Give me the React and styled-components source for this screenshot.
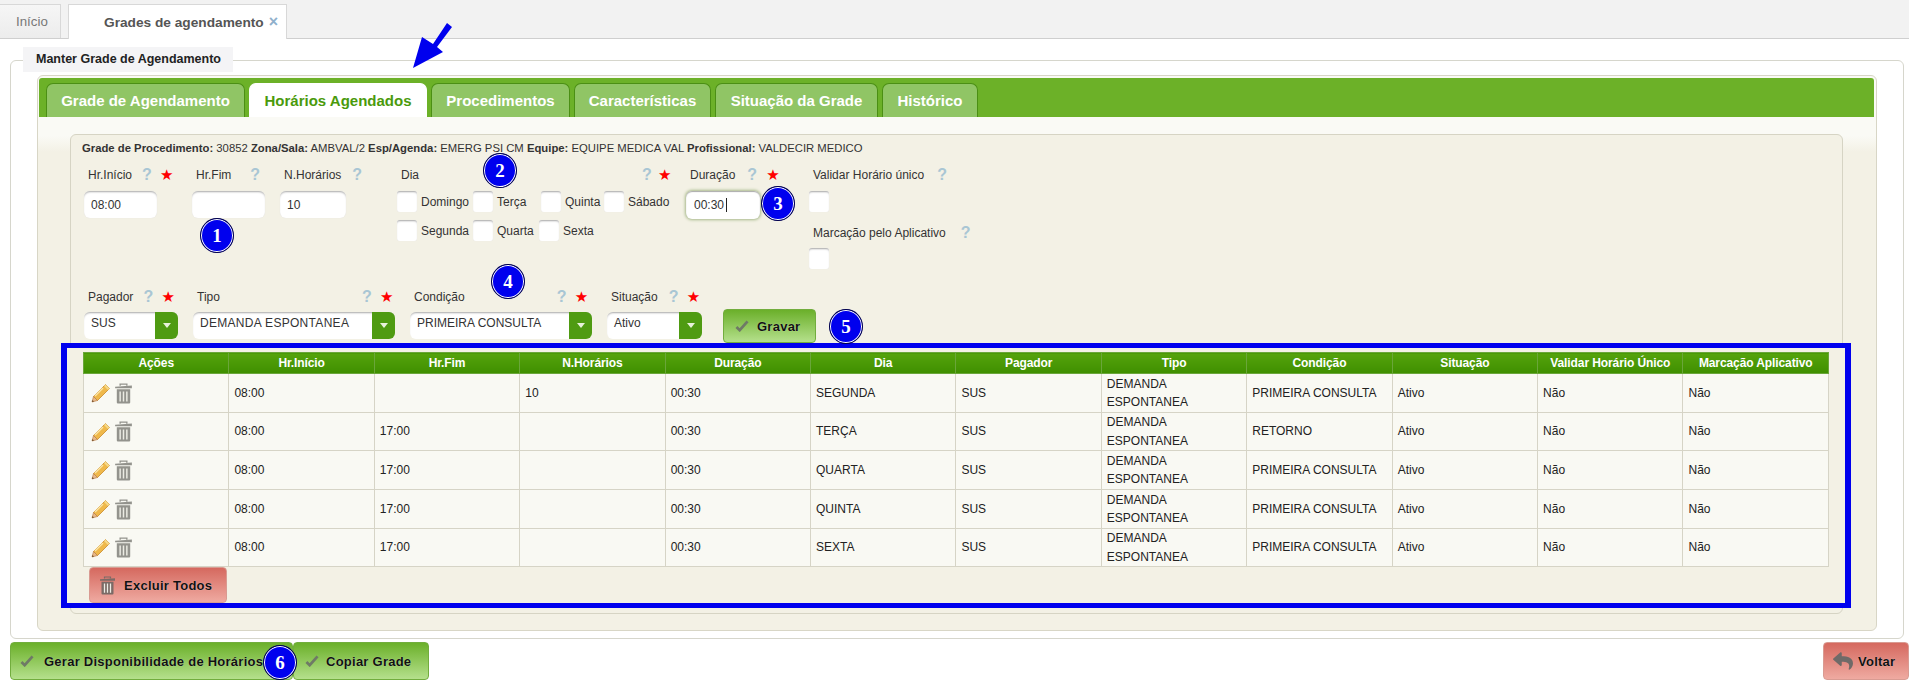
import React from "react";
import styled, { createGlobalStyle } from "styled-components";
import { FaReply } from "react-icons/fa";

const Global = createGlobalStyle`
  html, body { margin: 0; padding: 0; background: #fff; }
  body { width: 1909px; height: 685px; overflow: hidden; font-family: "Liberation Sans", Arial, sans-serif; font-size: 12px; color: #333; }
`;

const Page = styled.div`position: relative; width: 1909px; height: 685px; overflow: hidden;`;

const TabStrip = styled.nav`
  display: flex; align-items: flex-end; gap: 7px; height: 38px; background: #f2f2f2;
  border-bottom: 1px solid #cfcfcf;
`;
const PageTab = styled.div`
  box-sizing: border-box; height: ${p => (p.$active ? 35 : 34)}px; width: ${p => p.$w}px;
  margin-bottom: ${p => (p.$active ? -1 : 0)}px; padding-left: ${p => p.$pl}px;
  display: flex; align-items: center; gap: 5px; font-size: ${p => (p.$active ? 13.7 : 13.3)}px;
  font-weight: ${p => (p.$active ? 700 : 400)}; color: ${p => (p.$active ? "#555" : "#777")};
  background: ${p => (p.$active ? "#fff" : "linear-gradient(#f6f6f6, #ececec)")};
  border: 1px solid #d8d8d8; border-bottom: none; border-left-width: ${p => (p.$active ? 1 : 0)}px;
`;
const CloseX = styled.span`color: #8fb0cc; font-size: 16px; font-weight: 700;`;

const Fieldset = styled.section`
  margin: 21px 5px 0 10px; height: 579px; box-sizing: border-box;
  border: 1px solid #d6d6cc; border-radius: 6px;
`;
const Legend = styled.div`
  box-sizing: border-box; width: 210px; height: 25px; margin: -14px 0 0 12px; padding-left: 13px;
  background: #f4f4f6; font-size: 12.5px; font-weight: 700; color: #222; line-height: 25px;
`;
const TabsPanel = styled.div`
  box-sizing: border-box; height: 556px; margin: 3px 26px 0 26px;
  border: 1px solid #d8d6c6; border-radius: 6px; padding-top: 2px;
  background: linear-gradient(#fafaf5 0, #fafaf5 60px, #f3f1e5 76px);
`;
const TabHeader = styled.div`
  display: flex; gap: 4px; height: 39px; box-sizing: border-box; margin: 0 2px 0 1px; padding: 5px 0 0 7px;
  background: #6cb128; border-radius: 3px 3px 0 0;
`;
const GreenTab = styled.div`
  box-sizing: border-box; width: ${p => p.$w}px; height: 34px; display: flex; align-items: center; justify-content: center;
  font-size: 15px; font-weight: 700; border: 1px solid #4b8f14; border-bottom: none; border-radius: 7px 7px 0 0;
  color: ${p => (p.$active ? "#4a9a0c" : "#fff")};
  background: ${p => (p.$active ? "#fff" : "#90c565")};
  border-color: ${p => (p.$active ? "#fff" : "#4b8f14")};
`;
const TabBody = styled.div`padding: 17px 33px 0 32px;`;
const InfoPanel = styled.div`
  box-sizing: border-box; height: 480px; border: 1px solid #d6d4c4; border-radius: 6px; background: #f3f1e5;
`;
const InfoLine = styled.div`
  padding: 6px 0 0 11px; height: 14px; line-height: 14px; font-size: 11.3px; color: #333;
  b { font-weight: 700; }
`;
const FormRow = styled.div`display: flex; margin: ${p => p.$mt}px 0 0 13px; align-items: flex-start;`;
const Field = styled.div`width: ${p => p.$w}px; flex: none; display: flex; flex-direction: column;`;
const LabelRow = styled.div`
  display: flex; align-items: center; height: 16px; margin-bottom: ${p => p.$mb ?? 8}px; margin-top: ${p => p.$mt ?? 0}px; padding-left: 4px;
  font-size: 12px; color: #333; white-space: nowrap;
`;
const Q = styled.span`
  width: 8px; margin-left: ${p => p.$ml}px; font-size: 16px; font-weight: 700; color: #a9c6d4; text-align: center;
`;
const Star = styled.span`
  width: 12px; margin-left: ${p => p.$ml ?? 10}px; font-family: "DejaVu Sans", sans-serif; font-size: 15px; color: #f00; text-align: center; line-height: 12px;
`;
const TextInput = styled.input`
  box-sizing: border-box; width: ${p => p.$w}px; height: 27px; padding: 0 7px; border: none; border-radius: 6px;
  font: 12px "Liberation Sans", Arial, sans-serif; color: #333; background: #fff; outline: none;
  box-shadow: inset 0 2px 2px -1px #a9a9a9, 0 0 1px #ddd;
`;
const FocusWrap = styled.div`position: relative; width: 74px;`;
const FocusInput = styled(TextInput)`
  height: 28px; padding-left: 8px; box-shadow: 0 0 3px 1px #a7b98a, inset 0 1px 1px #aaa;
`;
const Caret = styled.i`position: absolute; left: 40px; top: 7px; width: 1px; height: 14px; background: #222;`;
const Check = styled.input.attrs({ type: "checkbox" })`
  appearance: none; -webkit-appearance: none; box-sizing: border-box; flex: none; width: 20px; height: 21px; margin: 0;
  border-radius: 3px; background: #fff; box-shadow: inset 0 2px 2px -1px #a5a5a5, 0 0 1px #e3e3e3;
`;
const DayRow = styled.div`display: flex; height: 29px; &:last-child { height: 21px; }`;
const DayItem = styled.label`
  display: flex; align-items: center; gap: 4px; width: ${p => p.$w}px; height: 21px; flex: none; font-size: 12px; color: #333;
`;
const SelectBox = styled.div`
  box-sizing: border-box; display: flex; justify-content: space-between; width: ${p => p.$w}px; height: 27px;
  border-radius: 6px; overflow: hidden; background: #fff; box-shadow: inset 0 2px 2px -1px #a9a9a9;
`;
const SelectText = styled.span`padding: 4px 0 0 7px; font-size: 12px; color: #333; letter-spacing: ${p => p.$ls ?? 0}px; white-space: nowrap;`;
const SelectArrow = styled.span`
  width: 23px; background: #4f9b12; display: flex; align-items: center; justify-content: center;
  &::after { content: ""; border-left: 4px solid transparent; border-right: 4px solid transparent; border-top: 5px solid #e8f2dc; }
`;
const Button = styled.button`
  box-sizing: border-box; flex: none; display: flex; align-items: center; gap: ${p => p.$gap ?? 9}px;
  width: ${p => p.$w}px; height: ${p => p.$h}px; padding: 0 0 0 ${p => p.$pl ?? 9}px; margin: ${p => p.$m ?? 0};
  border: 1px solid ${p => (p.$red ? "#d99b92" : "#72ad3e")}; border-radius: 4px;
  background: ${p => (p.$red ? "linear-gradient(#d5695f, #efaaa1)" : "linear-gradient(#6bb02a, #b5e08c)")};
  font: 700 13px "Liberation Sans", Arial, sans-serif; color: #111; letter-spacing: 0.25px; white-space: nowrap;
  text-shadow: 0 0 1px rgba(255,255,255,.5);
  & > svg { flex: none; }
`;
const TableFrame = styled.div`
  box-sizing: border-box; height: 265px; margin: 0 -9px 0 -10px; padding: 4px 16px 0 16px;
  border: 5px solid #0000ee; background: #f3f1e5; border-left-width: 6px; border-right-width: 6px;
`;
const Table = styled.table`
  width: 100%; table-layout: fixed; border-collapse: collapse; font-size: 12px; color: #222;
`;
const Th = styled.th`
  height: 20px; padding: 0; font-size: 12px; font-weight: 700; color: #fff; border: 1px solid #6aa63a;
  background: linear-gradient(#55a30c, #3f8f00); letter-spacing: -0.1px;
`;
const Tr = styled.tr`height: ${p => p.$h}px;`;
const Td = styled.td`
  padding: 0 0 0 5px; line-height: 18.5px; background: #f9f9f3; border: 1px solid #d6d4c6; overflow: hidden;
`;
const ActionIcons = styled.div`display: flex; align-items: center; gap: 3px; padding-left: 2px; height: 24px;`;
const BottomBar = styled.div`display: flex; margin: 3px 0 0 10px;`;
const Spacer = styled.div`flex: 1;`;
const Mark = styled.div`
  position: absolute; left: ${p => p.$x}px; top: ${p => p.$y}px; box-sizing: border-box; width: 34px; height: 35px;
  border-radius: 50%; background: #0000ee; border: 1px solid #00004a; box-shadow: inset 0 0 0 1px #fff;
  display: flex; align-items: center; justify-content: center;
  font: 700 19px "Liberation Serif", serif; color: #fff;
`;
const ArrowMark = styled.svg`position: absolute; left: 405px; top: 18px;`;

const Pencil = () => (
  <svg width="20" height="20" viewBox="0 0 20 20">
    <path d="M14.5 1.5l4 4L6.5 17.5l-4-4z" fill="#efb84a" stroke="#c98a2a" strokeWidth="0.8" />
    <path d="M13 3l4 4 1.5-1.5-4-4z" fill="#f5d98a" />
    <path d="M2.5 13.5l4 4-5.5 1.5z" fill="#e8b98a" stroke="#b5763a" strokeWidth="0.6" />
    <path d="M1 19l2-.5-1.5-1.5z" fill="#6b4a2a" />
    <path d="M12 5L4 13" stroke="#fbe6a8" strokeWidth="1.4" />
  </svg>
);
const Trash = ({ w = 19, h = 21, c = "#93938d" }) => (
  <svg width={w} height={h} viewBox="0 0 17 20" preserveAspectRatio="none">
    <path d="M5.5 2.5V1h6v1.5" fill="none" stroke={c} strokeWidth="1.2" />
    <path d="M1 3.5l15-1.2V5H1z" fill={c} />
    <path d="M2.5 6h12v12.5a1 1 0 0 1-1 1h-10a1 1 0 0 1-1-1z" fill={c} />
    <path d="M5.5 8v9.5M8.5 8v9.5M11.5 8v9.5" stroke="#ecece4" strokeWidth="1.3" />
  </svg>
);
const Tick = () => (
  <svg width="14" height="12" viewBox="0 0 15 13">
    <path d="M1.5 7.5l3.5 3.5L13.5 1.5" fill="none" stroke="#6f7a66" strokeWidth="3" />
  </svg>
);
const Label = ({ text, q, star, mb, s }) => (
  <LabelRow $mb={mb}>
    {text}
    <Q $ml={q}>?</Q>
    {star && <Star $ml={s}>★</Star>}
  </LabelRow>
);

const columns = ["Ações", "Hr.Início", "Hr.Fim", "N.Horários", "Duração", "Dia", "Pagador", "Tipo", "Condição", "Situação", "Validar Horário Único", "Marcação Aplicativo"];
const rows = [
  { fim: "", n: "10", dia: "SEGUNDA", cond: "PRIMEIRA CONSULTA", h: 39 },
  { fim: "17:00", n: "", dia: "TERÇA", cond: "RETORNO", h: 38 },
  { fim: "17:00", n: "", dia: "QUARTA", cond: "PRIMEIRA CONSULTA", h: 39 },
  { fim: "17:00", n: "", dia: "QUINTA", cond: "PRIMEIRA CONSULTA", h: 39 },
  { fim: "17:00", n: "", dia: "SEXTA", cond: "PRIMEIRA CONSULTA", h: 38 },
];
const tabs = [
  ["Grade de Agendamento", 199], ["Horários Agendados", 178, true], ["Procedimentos", 139],
  ["Características", 137], ["Situação da Grade", 163], ["Histórico", 96],
];
const marks = [["1", 200, 218], ["2", 483, 153], ["3", 761, 186], ["4", 491, 264], ["5", 829, 309], ["6", 263, 645]];

export default function App() {
  return (
    <Page>
      <Global />
      <TabStrip>
        <PageTab $w={61} $pl={16}>Início</PageTab>
        <PageTab $active $w={219} $pl={35}>Grades de agendamento <CloseX>×</CloseX></PageTab>
      </TabStrip>
      <Fieldset>
        <Legend>Manter Grade de Agendamento</Legend>
        <TabsPanel>
          <TabHeader>
            {tabs.map(([t, w, a]) => <GreenTab key={t} $w={w} $active={a}>{t}</GreenTab>)}
          </TabHeader>
          <TabBody>
            <InfoPanel>
              <InfoLine>
                <b>Grade de Procedimento:</b> 30852 <b>Zona/Sala:</b> AMBVAL/2 <b>Esp/Agenda:</b> EMERG PSI CM <b>Equipe:</b> EQUIPE MEDICA VAL <b>Profissional:</b> VALDECIR MEDICO
              </InfoLine>
              <FormRow $mt={12}>
                <Field $w={108}><Label text="Hr.Início" q={10} star /><TextInput $w={73} defaultValue="08:00" /></Field>
                <Field $w={88}><Label text="Hr.Fim" q={19} /><TextInput $w={73} /></Field>
                <Field $w={117}><Label text="N.Horários" q={11} /><TextInput $w={66} defaultValue="10" /></Field>
                <Field $w={289}>
                  <Label text="Dia" q={223} star s={8} />
                  <DayRow>
                    <DayItem $w={76}><Check />Domingo</DayItem>
                    <DayItem $w={68}><Check />Terça</DayItem>
                    <DayItem $w={63}><Check />Quinta</DayItem>
                    <DayItem $w={70}><Check />Sábado</DayItem>
                  </DayRow>
                  <DayRow>
                    <DayItem $w={76}><Check />Segunda</DayItem>
                    <DayItem $w={66}><Check />Quarta</DayItem>
                    <DayItem $w={60}><Check />Sexta</DayItem>
                  </DayRow>
                </Field>
                <Field $w={123}>
                  <Label text="Duração" q={12} star s={11} />
                  <FocusWrap><FocusInput $w={74} defaultValue="00:30" /><Caret /></FocusWrap>
                </Field>
                <Field $w={200}>
                  <Label text="Validar Horário único" q={13} />
                  <Check />
                  <LabelRow $mb={7} $mt={13}>Marcação pelo Aplicativo<Q $ml={15}>?</Q></LabelRow>
                  <Check />
                </Field>
              </FormRow>
              <FormRow $mt={20}>
                <Field $w={109}><Label text="Pagador" q={10} star mb={7} /><SelectBox $w={94}><SelectText>SUS</SelectText><SelectArrow /></SelectBox></Field>
                <Field $w={217}><Label text="Tipo" q={142} star mb={7} /><SelectBox $w={202}><SelectText $ls={0.3}>DEMANDA ESPONTANEA</SelectText><SelectArrow /></SelectBox></Field>
                <Field $w={197}><Label text="Condição" q={92} star mb={7} /><SelectBox $w={182}><SelectText>PRIMEIRA CONSULTA</SelectText><SelectArrow /></SelectBox></Field>
                <Field $w={116}><Label text="Situação" q={11} star mb={7} /><SelectBox $w={95}><SelectText>Ativo</SelectText><SelectArrow /></SelectBox></Field>
                <Button $w={93} $h={34} $m="20px 0 0 0" $pl={11} $gap={8}><Tick />Gravar</Button>
              </FormRow>
              <TableFrame>
                <Table>
                  <thead>
                    <tr>{columns.map(c => <Th key={c}>{c}</Th>)}</tr>
                  </thead>
                  <tbody>
                    {rows.map(r => (
                      <Tr key={r.dia} $h={r.h}>
                        <Td><ActionIcons><Pencil /><Trash /></ActionIcons></Td>
                        <Td>08:00</Td>
                        <Td>{r.fim}</Td>
                        <Td>{r.n}</Td>
                        <Td>00:30</Td>
                        <Td>{r.dia}</Td>
                        <Td>SUS</Td>
                        <Td>DEMANDA ESPONTANEA</Td>
                        <Td>{r.cond}</Td>
                        <Td>Ativo</Td>
                        <Td>Não</Td>
                        <Td>Não</Td>
                      </Tr>
                    ))}
                  </tbody>
                </Table>
                <Button $red $w={138} $h={36} $m="0 0 0 6px" $pl={9} $gap={8}><Trash w={17} h={19} c="#7b6a66" />Excluir Todos</Button>
              </TableFrame>
            </InfoPanel>
          </TabBody>
        </TabsPanel>
      </Fieldset>
      <BottomBar>
        <Button $w={283} $h={38} $gap={10}><Tick />Gerar Disponibilidade de Horários</Button>
        <Button $w={136} $h={38} $pl={11} $gap={7}><Tick />Copiar Grade</Button>
        <Spacer />
        <Button $red $w={86} $h={38} $pl={9} $gap={5}><FaReply size={20} color="#6f6a68" />Voltar</Button>
      </BottomBar>
      <ArrowMark width="55" height="55" viewBox="405 18 55 55">
        <polygon points="413,68 422,37 433,44 447,23 452,27 437,47 443,52" fill="#0000ee" />
      </ArrowMark>
      {marks.map(([n, x, y]) => <Mark key={n} $x={x} $y={y}>{n}</Mark>)}
    </Page>
  );
}
